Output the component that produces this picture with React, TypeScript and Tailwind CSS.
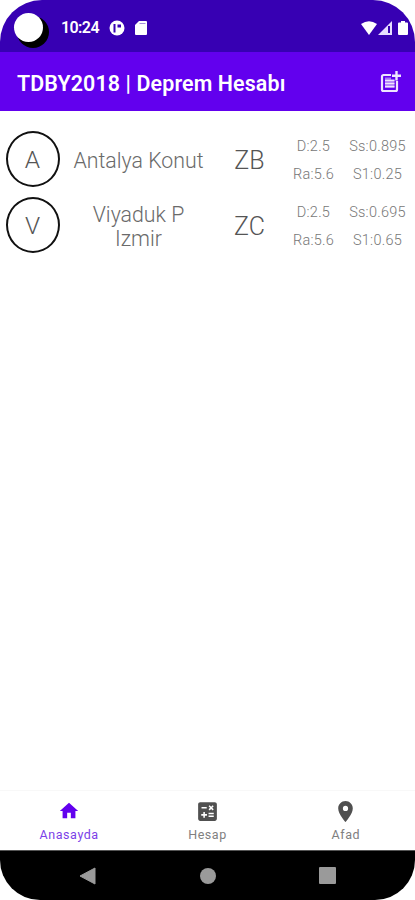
import type { ReactNode } from 'react';
import { MdCalculate, MdHome, MdLocationOn } from 'react-icons/md';

interface Project {
  name: string;
  soil: string;
  d: string;
  ra: string;
  ss: string;
  s1: string;
}

const projects: Project[] = [
  { name: 'Antalya Konut', soil: 'ZB', d: '2.5', ra: '5.6', ss: '0.895', s1: '0.25' },
  { name: 'Viyaduk P Izmir', soil: 'ZC', d: '2.5', ra: '5.6', ss: '0.695', s1: '0.65' },
];

export default function App() {
  return (
    <div className="h-[900px] w-[415px] overflow-hidden bg-white font-['Roboto',sans-serif]">
      <div className="flex h-full flex-col overflow-hidden rounded-t-[42px] rounded-b-[40px] bg-white">
        <StatusBar />
        <header className="flex h-[59px] shrink-0 items-center justify-between bg-[#6200ee] pt-1 pr-[14px] pl-[17px] text-white">
          <h1 className="text-[21.4px] leading-none font-semibold tracking-[0.13px] whitespace-nowrap">
            TDBY2018 | Deprem Hesabı
          </h1>
          <PostAddIcon />
        </header>
        <main className="flex-1 pt-[15px]">
          {projects.map((p) => (
            <ProjectRow key={p.name} project={p} />
          ))}
        </main>
        <nav className="grid h-[60px] shrink-0 grid-cols-3 border-t border-[#f8f8f8] bg-white">
          <NavItem label="Anasayda" icon={<MdHome className="size-[22px]" />} active />
          <NavItem label="Hesap" icon={<MdCalculate className="size-[25px]" />} />
          <NavItem label="Afad" icon={<MdLocationOn className="size-[25px]" />} />
        </nav>
        <SystemNav />
      </div>
    </div>
  );
}

function PostAddIcon() {
  return (
    <svg viewBox="0 0 22 22" className="mb-1 size-[22px] text-[#eee4ff]">
      <path
        d="M12 4H4.5A1.5 1.5 0 0 0 3 5.5v13A1.5 1.5 0 0 0 4.5 20h12a1.5 1.5 0 0 0 1.5-1.5V10"
        fill="none"
        stroke="currentColor"
        strokeWidth="2.2"
      />
      <path d="M6 6.500h6v2h3.500V17H6z" fill="currentColor" fillOpacity="0.5" />
      <path d="M6 9.5h9.500M6 12.5h9.500M6 15.500h9.500" stroke="currentColor" strokeWidth="1.6" />
      <path d="M17.500 0v9.500M13 4.700h9" stroke="currentColor" strokeWidth="2.4" />
    </svg>
  );
}

function StatusBar() {
  return (
    <div className="flex h-[52px] shrink-0 items-center bg-[#3700b3] pr-[7px] pl-[17px] text-white">
      <div className="mt-3 size-8 rounded-full bg-black">
        <div className="-mt-[3px] -ml-[3px] size-[29px] rounded-full bg-white" />
      </div>
      <span className="mt-[3px] ml-3 w-[38px] text-[16px] leading-none font-semibold tracking-[-0.6px]">10:24</span>
      <svg viewBox="0 0 16 16" className="mt-[3px] ml-[10px] size-4">
        <circle cx="8" cy="8" r="7.5" fill="white" />
        <path d="M5.5 4v8.5" stroke="#3700b3" strokeWidth="2" />
        <path d="M8.5 4.5H12v3H8.500z" fill="#3700b3" />
      </svg>
      <svg viewBox="0 0 12 14" className="mt-[3px] ml-[10px] h-[14px] w-3">
        <path d="M4 0h7a1 1 0 0 1 1 1v12a1 1 0 0 1-1 1H1a1 1 0 0 1-1-1V4z" fill="white" />
        <path d="M4.5 2.5h6" stroke="#3700b3" strokeOpacity="0.45" strokeWidth="1" />
      </svg>
      <div className="mt-[3px] ml-auto flex items-center">
        <svg viewBox="0 0 16 14" className="h-[14px] w-4">
          <path d="M0 3Q8-2.5 16 3L8 14z" fill="white" />
        </svg>
        <svg viewBox="0 0 14 14" className="ml-px h-[14px] w-[14px]">
          <path d="M0 14 14 0v14z" fill="#e6dcff" />
          <path d="M11 5v7" stroke="#3700b3" strokeWidth="2" />
        </svg>
        <svg viewBox="0 0 10 14" className="ml-[6px] h-[14px] w-[10px]">
          <path d="M3 0h4v1.5h2a1 1 0 0 1 1 1V13a1 1 0 0 1-1 1H1a1 1 0 0 1-1-1V2.5a1 1 0 0 1 1-1h2z" fill="white" />
        </svg>
      </div>
    </div>
  );
}

function ProjectRow({ project }: { project: Project }) {
  return (
    <div className="grid h-[66px] grid-cols-[65px_147px_75px_53px_75px] items-center text-center text-[#6a6a6a]">
      <div className="ml-[5.5px] flex h-[56px] w-[54px] items-center justify-center rounded-[50%] border-2 border-[#111] pt-[3px] text-[24.5px] font-[350] text-[#555]">
        {project.name[0]}
      </div>
      <div className="px-[7px] pt-1 text-[21.3px] leading-[24.5px] font-[350]">{project.name}</div>
      <div className="pt-1 text-[25px] font-[350] text-[#555]">{project.soil}</div>
      <Values top={`D:${project.d}`} bottom={`Ra:${project.ra}`} />
      <Values top={`Ss:${project.ss}`} bottom={`S1:${project.s1}`} />
    </div>
  );
}

function Values({ top, bottom }: { top: string; bottom: string }) {
  return (
    <div className="flex flex-col pt-[3px] text-[14.5px] leading-[28px] font-[350] tracking-[0.25px] text-[#777]">
      <span>{top}</span>
      <span>{bottom}</span>
    </div>
  );
}

function NavItem({ label, icon, active }: { label: string; icon: ReactNode; active?: boolean }) {
  return (
    <button
      type="button"
      className={`flex flex-col items-center pt-2 ${active ? 'text-[#6200ee]' : 'text-[#505050]'}`}
    >
      <span className="flex h-6 items-center">{icon}</span>
      <span className={`mt-1 text-[12.5px] leading-4 tracking-[0.55px] ${active ? 'text-[#7c3fe8]' : 'text-[#808080]'}`}>
        {label}
      </span>
    </button>
  );
}

function SystemNav() {
  return (
    <div className="flex h-[50px] shrink-0 items-center justify-between border-t border-[#555] bg-black pr-[79px] pl-[79px] text-[#9a9a9a]">
      <svg viewBox="0 0 17 18" className="h-[18px] w-[17px]">
        <path d="M16 1v16L1 9z" fill="currentColor" stroke="currentColor" strokeLinejoin="round" />
      </svg>
      <div className="size-4 rounded-full bg-current" />
      <div className="size-[17px] rounded-[1px] bg-current" />
    </div>
  );
}
